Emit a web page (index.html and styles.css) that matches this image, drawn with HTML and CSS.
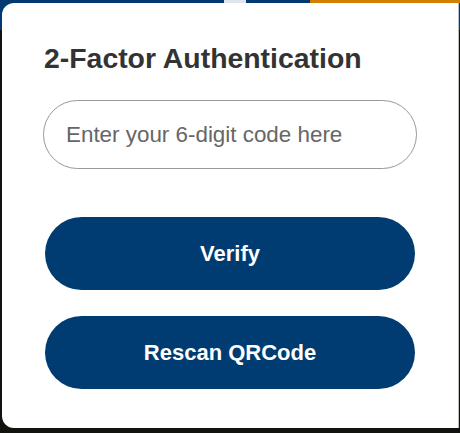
FILE: index.html
```html
<!DOCTYPE html>
<html lang="en">
<head>
    <meta charset="UTF-8">
    <meta name="viewport" content="width=device-width, initial-scale=1.0">
    <title>2-Factor Authentication</title>
    <link rel="stylesheet" href="styles.css">
</head>
<body>
    <div class="modal">
        <h1>2-Factor Authentication</h1>
        <form id="otpForm">
            <input type="text" id="otp" name="otp" inputmode="numeric" maxlength="6" placeholder="Enter your 6-digit code here">
            <button type="submit" class="btn">Verify</button>
            <button type="button" class="btn">Rescan QRCode</button>
        </form>
    </div>
</body>
</html>
```

FILE: styles.css
```css
html, body {
    height: 100%;
}
body {
    margin: 0;
    padding: 3px 0 0 2px;
    box-sizing: border-box;
    font-family: "Liberation Sans", Arial, sans-serif;
    /* page behind the modal: nav bar edge peeking out on top */
    background:
        linear-gradient(90deg, transparent 224px, #dfe5ec 224px 246px, transparent 246px) top left / 100% 3px no-repeat,
        linear-gradient(90deg, transparent 310px, #d17f00 310px) top left / 100% 3px no-repeat,
        linear-gradient(#003a70 0 30px, #12130f 30px);
    overflow: hidden;
}
.modal {
    width: 457px;
    height: 425px;
    box-sizing: border-box;
    background: #fff;
    border-right: 1px solid #bdbdbd;
    border-radius: 12px 0 0 12px;
    padding: 38px 42px 0 42px;
}
h1 {
    margin: 0;
    font-size: 28.4px;
    font-weight: bold;
    color: #333;
    line-height: 34px;
}
form {
    display: flex;
    flex-direction: column;
    align-items: center;
    margin-top: 25px;
}
input {
    width: 374px;
    height: 69px;
    box-sizing: border-box;
    border: 1px solid #999;
    border-radius: 35px;
    padding: 0 22px;
    font-family: inherit;
    font-size: 22.4px;
    color: #333;
    outline: none;
    margin-bottom: 48px;
}
input::placeholder {
    color: #666;
}
.btn {
    width: 370px;
    height: 73px;
    border: none;
    border-radius: 37px;
    background-color: #003b71;
    color: #fff;
    font-family: inherit;
    font-size: 22px;
    font-weight: bold;
    cursor: pointer;
    margin-bottom: 26px;
}
.btn:hover {
    background-color: #002b55;
}
```
